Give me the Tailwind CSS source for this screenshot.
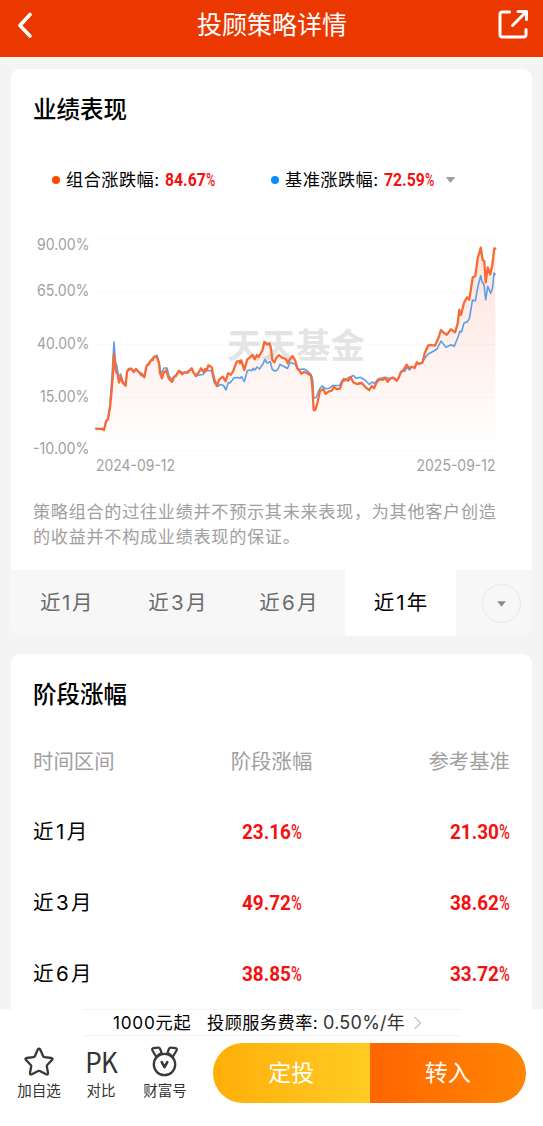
<!DOCTYPE html>
<html lang="zh-CN">
<head>
  <meta charset="UTF-8" />
  <meta name="viewport" content="width=device-width, initial-scale=1" />
  <title>投顾策略详情</title>
  <script src="https://cdn.jsdelivr.net/npm/@tailwindcss/browser@4"></script>
</head>
<body class="bg-[#f4f4f4] font-[Inter,'Noto_Sans_CJK_SC',sans-serif] text-black">
  <div class="flex h-[1126px] w-[543px] flex-col overflow-hidden">
    <!-- Barra superior -->
    <header class="flex h-[57px] shrink-0 items-start justify-between bg-[#ea3800] pl-[16px] pr-[14px] text-white">
      <svg class="mt-[12px] h-[27px] w-[30px]" viewBox="0 0 30 27" fill="none" stroke="currentColor" stroke-width="3.6" stroke-linecap="round" stroke-linejoin="round">
        <path d="M14 2.500 4 13.500l10 10.500" />
      </svg>
      <h1 class="mt-[7px] text-[25px] leading-[36px]">投顾策略详情</h1>
      <svg class="mt-[9px] h-[31px] w-[31px]" viewBox="0 0 31 31" fill="none" stroke="currentColor" stroke-width="3" stroke-linecap="round" stroke-linejoin="round">
        <path d="M11.500 3H4.500Q2 3 2 5.500V25.500Q2 28 4.500 28H25.500Q28 28 28 25.500V20.500" />
        <path d="M14.500 16.500 28 3M20 2.500H28.500V10.500" />
      </svg>
    </header>

    <main class="flex h-[952px] shrink-0 flex-col gap-[18px] overflow-hidden px-[11px] pt-[12px]">
      <!-- Rendimiento -->
      <section class="flex h-[567px] w-[521px] shrink-0 flex-col overflow-hidden rounded-[9px] bg-white">
        <h2 class="mt-[23px] pl-[22px] text-[23.500px] font-medium leading-[36px]">业绩表现</h2>
        <div class="mt-[39px] flex h-[26px] items-center pl-[41px] text-[17.200px]">
          <span class="-mt-px size-2 rounded-full bg-[#ff4b00]"></span>
          <span class="ml-[6px] w-[99px] whitespace-nowrap tracking-[0.450px]">组合涨跌幅:</span>
          <span class="flex w-[106px] font-[Roboto] text-[17.500px] text-[#f51010]">
            <span class="w-[41px] origin-left scale-x-[0.9] font-bold">84.67</span><span class="w-[10px] origin-left scale-x-[0.72] font-medium">%</span>
          </span>
          <span class="-mt-px size-2 rounded-full bg-[#0a8bff]"></span>
          <span class="ml-[6px] w-[99px] whitespace-nowrap tracking-[0.450px]">基准涨跌幅:</span>
          <span class="flex w-[61px] font-[Roboto] text-[17.500px] text-[#f51010]">
            <span class="w-[41px] origin-left scale-x-[0.9] font-bold">72.59</span><span class="w-[10px] origin-left scale-x-[0.72] font-medium">%</span>
          </span>
          <svg class="h-[6px] w-[11px]" viewBox="0 0 11 7" fill="#a0a0a0"><path d="M1 0h9q1 0 .4.8L6.200 6q-.7.800-1.400 0L.6.800Q0 0 1 0z" /></svg>
        </div>

        <!-- Gráfica -->
        <svg class="mt-[37px] h-[250px] w-[521px] shrink-0" viewBox="11 230 521 250">
          <defs>
            <linearGradient id="relleno" x1="0" y1="245" x2="0" y2="450" gradientUnits="userSpaceOnUse">
              <stop offset="0" stop-color="#ff5a30" stop-opacity="0.170" />
              <stop offset="0.600" stop-color="#ff5a30" stop-opacity="0.070" />
              <stop offset="1" stop-color="#ff5a30" stop-opacity="0" />
            </linearGradient>
          </defs>
          <path d="M96 238.500H496M96 291.500H496M96 344.500H496M96 397.500H496M96 450.500H496" stroke="#fafafa" />
          <text x="227" y="358" font-size="34.500" font-weight="700" fill="#e4e4e4">天天基金</text>
          <g font-size="15.500" fill="#a0a0a0" text-anchor="end">
            <text x="89.500" y="249.500" textLength="52.500" lengthAdjust="spacingAndGlyphs">90.00%</text>
            <text x="89.500" y="296" textLength="52.500" lengthAdjust="spacingAndGlyphs">65.00%</text>
            <text x="89.500" y="348.500" textLength="52.500" lengthAdjust="spacingAndGlyphs">40.00%</text>
            <text x="89.500" y="401.500" textLength="49.500" lengthAdjust="spacingAndGlyphs">15.00%</text>
            <text x="89.500" y="454" textLength="56.500" lengthAdjust="spacingAndGlyphs">-10.00%</text>
          </g>
          <g font-size="15.500" fill="#a0a0a0">
            <text x="96" y="471" textLength="79" lengthAdjust="spacingAndGlyphs">2024-09-12</text>
            <text x="416.500" y="471" textLength="79" lengthAdjust="spacingAndGlyphs">2025-09-12</text>
          </g>
          <path id="area" fill="url(#relleno)" />
          <path id="base" fill="none" stroke="#5c9fe8" stroke-width="1.600" stroke-linejoin="round" />
          <path id="combo" fill="none" stroke="#f76a35" stroke-width="2.300" stroke-linejoin="round" stroke-linecap="round" />
        </svg>

        <p class="mt-[19px] w-[500px] pl-[22px] text-[17.150px] leading-[25px] tracking-[0.690px] whitespace-nowrap text-[#a0a0a0]">策略组合的过往业绩并不预示其未来表现，为其他客户创造<br />的收益并不构成业绩表现的保证。</p>

        <!-- Pestañas -->
        <div class="mt-auto flex h-[66px] shrink-0 bg-[#f7f7f7] pt-0 text-[20.500px] tracking-[1.500px] text-[#6a6a6a]">
          <div class="flex w-[112px] items-center justify-center pt-px">近1月</div>
          <div class="flex w-[111px] items-center justify-center pt-px tracking-[2.300px]">近3月</div>
          <div class="flex w-[111px] items-center justify-center pt-px tracking-[2.300px]">近6月</div>
          <div class="flex w-[111px] items-center justify-center bg-white pl-[2px] pt-px tracking-[2px] text-black">近1年</div>
          <div class="flex flex-1 items-center justify-center pl-[15px]">
            <span class="flex size-[39px] items-center justify-center rounded-full border border-[#e8e8e8]">
              <svg class="mt-[2px] h-[6px] w-[9px]" viewBox="0 0 11 7" fill="#8c8c8c"><path d="M1 0h9q1 0 .4.800L6.200 6q-.7.800-1.400 0L.6.800Q0 0 1 0z" /></svg>
            </span>
          </div>
        </div>
      </section>

      <!-- Tabla por periodos -->
      <section class="h-[420px] w-[521px] shrink-0 rounded-t-[9px] bg-white px-[22px] pt-[23px]">
        <h2 class="text-[23.500px] font-medium leading-[36px]">阶段涨幅</h2>
        <div class="mt-[13px] grid grid-cols-3 items-center text-[20.400px] leading-[71px] text-[#a0a0a0]">
          <span>时间区间</span><span class="text-center">阶段涨幅</span><span class="text-right">参考基准</span>
        </div>
        <div id="filas" class="flex flex-col"></div>
      </section>
    </main>

    <!-- Barra inferior -->
    <footer class="flex flex-1 flex-col bg-white">
      <div class="ml-[83px] flex h-[27px] w-[378px] shrink-0 items-center whitespace-nowrap border-y border-[#f3f3f3] pl-[30px] text-[17.200px]">
        <span class="w-[94px] tracking-[0.750px]">1000元起</span>
        <span class="w-[116px] tracking-[0.450px]">投顾服务费率:</span>
        <span class="text-[18px] tracking-[0.250px] text-[#333]">0.50%/年</span>
        <svg class="ml-[8px] h-[14px] w-[9px]" viewBox="0 0 9 14" fill="none" stroke="#c8c8c8" stroke-width="1.500"><path d="m1.500 1 6 6-6 6" /></svg>
      </div>
      <div class="mt-[7px] flex h-[60px] items-start pl-[9px] text-[14.500px] leading-[20px] text-[#333]">
        <div class="flex w-[60px] flex-col items-center">
          <svg class="mt-[4px] h-[30px] w-[30px]" viewBox="0 0 30 30" fill="none" stroke="#3a3a3a" stroke-width="2.300" stroke-linejoin="round">
            <path d="M13.800 2.500Q15 .700 16.200 2.500L19.200 9.300Q19.500 10 20.300 10.100L27.500 11Q29.300 11.400 28.100 12.900L23.200 18Q22.700 18.600 22.800 19.300L24 26Q24.100 28.200 22.100 27.300L15.800 24Q15 23.600 14.200 24L7.900 27.300Q5.900 28.200 6 26L7.200 19.300Q7.300 18.600 6.800 18L1.900 12.900Q.7 11.400 2.500 11L9.700 10.100Q10.500 10 10.800 9.300Z" />
          </svg>
          <span class="mt-[4px]">加自选</span>
        </div>
        <div class="flex w-[64px] flex-col items-center">
          <span class="mt-[5px] h-[33px] scale-x-[0.93] font-['Noto_Sans_CJK_SC'] text-[28px] leading-[27px] tracking-[-0.800px]">PK</span>
          <span>对比</span>
        </div>
        <div class="flex w-[64px] flex-col items-center">
          <svg class="mt-[3px] h-[31px] w-[30px]" viewBox="0 0 30 31" fill="none" stroke="#3a3a3a" stroke-width="2.300" stroke-linejoin="round" stroke-linecap="round">
            <circle cx="14.500" cy="18.500" r="10.700" />
            <path d="M6.300 11 2.500 4.500Q1.500 2.500 3.500 2.200L8 1.700Q9.500 1.600 10.100 2.800L11.600 7.200Q9 8 6.300 11ZM22.700 11 26.500 4.500Q27.500 2.500 25.500 2.200L21 1.700Q19.500 1.600 18.900 2.800L17.400 7.200Q20 8 22.700 11Z" />
            <path d="m11.700 16.200 2.800 5 2.800-5" stroke-width="2.600" />
          </svg>
          <span class="mt-[4px]">财富号</span>
        </div>
        <div class="ml-[16px] flex h-[60px] w-[313px] overflow-hidden rounded-full text-[23px] text-white">
          <button class="flex flex-1 items-center justify-center bg-linear-to-r from-[#ffae06] to-[#ffcc22]">定投</button>
          <button class="flex flex-1 items-center justify-center bg-linear-to-r from-[#ff6500] to-[#ff8503]">转入</button>
        </div>
      </div>
    </footer>
  </div>

  <script>
    // Puntos de las dos series, en coordenadas del viewBox
    const combo = '96,428.7 102.7,429 104,430 106,421.7 108,419 110,408 111.7,390 113,373 114,354 115,363 116,371.7 117.7,374 119,382.7 121,377 122.7,383 125.7,385.7 127,371.7 128.7,369 131.3,368.7 133.7,372 136,369 139,372.3 141.7,373.7 144.3,377.3 146.7,365.7 149,364 151,360.3 152.7,360 154,356.7 157,357.3 159,363 160,373.3 162,378.3 163.7,372.7 166.3,370.3 168.7,378.3 172,382 174,377 176,376 179,370.7 182,374.3 184.3,372.3 187.7,372.7 191.7,368.3 193.7,373 196.3,375.3 199,372 201,368.3 203.3,371.7 205.3,369 206.7,370.3 208.3,365.3 211.7,367.3 214,378.3 217,386 219.3,379.3 222.7,376.7 225.7,381.3 228,373.3 231,374.7 233.3,370.7 236.7,361.7 239,361 240,363.3 241.3,360.3 244.3,370 247.3,359.3 250,357.3 252.7,355 254.7,359.3 257,355 258.7,356.7 262.3,350.7 264.3,342 267.3,344.3 269.3,343.3 271,348.3 272.3,360 274.3,362.3 276.7,357.3 279,355 282,357.7 286,359 287.7,363.3 290,359 292.7,356 295.3,360.7 297.3,368.3 299.7,371 301.3,373.7 304,372 307.3,373.3 311,375.7 312.3,386.7 313.7,410 315.3,410 317.3,403.3 320,391 323.3,389 325.7,394 328.3,391.7 331.7,390.7 334,387 336.7,389 340,388.7 341.7,383.3 344,378.7 348.3,380.7 350.7,377.3 353.3,382.3 356.7,384 361.7,383 366,387.7 369.3,390 371.7,386 374,388.3 376.7,382.3 380,379 382.7,380 385,378 387.7,381.7 390,378.7 393.3,377.7 396.7,380.7 398.7,377.7 401,371.7 403.3,370.3 406.7,364.7 409.3,368.3 411.7,366.7 414.7,368 416.7,362.3 419,364 422.3,362.7 424.7,353.3 428.3,345.3 431.7,345 435,345.7 438.3,338.3 441,330 443.3,332.3 446.7,334.7 451,329.3 455,332.3 457.7,323.3 459.3,310 461,315 464,302.7 467,297.3 469.3,299.7 472.7,277.3 475.3,276 477.7,258.3 480.7,247.7 482.7,260 484.3,261 485.7,282.3 487.7,267.3 490.3,274.3 492.3,265 494.3,248.3 495.3,248.6';
    const base = '96,428.7 104,429.5 106,421 108,418 110,404 112,376 114,342 115.5,362 117,366 118.5,377 120.7,374 122,380 125.7,385 127,371.7 131.3,368.5 133.7,371.5 136,369.5 139,372.3 141,375.5 144.3,376.5 146.7,365.7 151,360 154,357 157,355.3 159,363 161,374 164,368 167,368 169,376 172,379.5 174,377 179,371 184.3,373 191.7,369 195.5,376.5 199,375 203,374.5 206.7,370.3 211.7,371 214,382 217,386.5 220.7,384.5 223.5,385.5 226,390 228.3,382.5 230,383 234,377.7 238,377.5 240,378.3 241.5,376.7 244.3,381.7 247.3,370.7 250,370 252,370.7 253,368.5 255,370 257,367 259.5,369 263,364 264.7,359.5 267,363 270.3,361.7 272.3,369.5 275,371 277.5,370 280,364.5 284,366.5 287.5,368.5 290,362.5 295,364 298,369.5 304,369 308,371.5 311,374.5 312.7,380 313.7,398 316,397.5 319.5,389 322,386 325.7,388.7 329,388.3 333,385.5 339.5,385.5 342,380.5 345,381 348,377.7 353.5,375.5 356,378.5 360,377.2 365,380 369.3,384.5 372,382 374.5,383.5 378,379 385,377.3 388,378.5 393.3,378 396.7,380.5 398.7,377.7 401,371.7 405,371 407,367 409.5,370 411.7,367 414.7,367.5 417,363.3 422.3,362.7 425,358 428,354 432,352 437,349 441,341 446,347.3 451,344.7 454.3,346.3 458,337 460,331.3 461.5,332 464,323 467,322 469.3,319 472.5,300 475.3,301 478,286 480.7,275.7 482,281.7 484,284.7 485.7,300 487.7,286.3 490.7,293.3 492.5,288 494,273 495.5,275';
    document.getElementById('combo').setAttribute('d', 'M' + combo);
    document.getElementById('base').setAttribute('d', 'M' + base);
    document.getElementById('area').setAttribute('d', 'M' + combo + ' 495.3,450 96,450Z');

    const filas = [
      ['近1月', '23.16', '21.30'],
      ['近3月', '49.72', '38.62'],
      ['近6月', '38.85', '33.72'],
    ];
    const cifra = (valor) => `<span class="w-[49px] origin-left scale-x-[0.9] font-bold">${valor}</span><span class="w-[11px] origin-left scale-x-[0.7] font-medium">%</span>`;
    document.getElementById('filas').innerHTML = filas.map(([periodo, alza, ref]) => `
      <div class="grid h-[71px] grid-cols-3 items-center font-[Roboto] text-[21px] text-[#f51010]">
        <span class="font-[Inter,'Noto_Sans_CJK_SC',sans-serif] text-[20.500px] tracking-[2.400px] text-black">${periodo}</span>
        <span class="flex justify-center">${cifra(alza)}</span>
        <span class="flex justify-end">${cifra(ref)}</span>
      </div>`).join('');
  </script>
</body>
</html>
